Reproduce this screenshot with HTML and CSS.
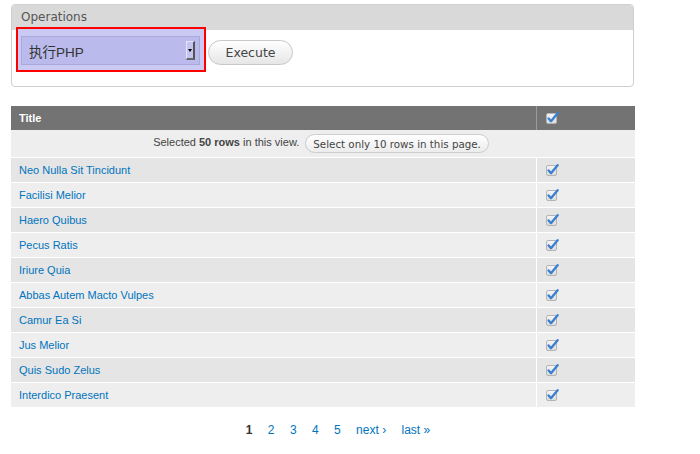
FILE: index.html
```html
<!DOCTYPE html>
<html>
<head>
<meta charset="utf-8">
<link rel="stylesheet" href="styles.css">
</head>
<body>
<div class="page">
  <div class="ops">
    <div class="ops-head">Operations</div>
    <div class="ops-body">
      <div class="highlight">
        <div class="select">
          <span class="select-value">执行PHP</span>
          <span class="select-arrow"><span class="tri"></span></span>
        </div>
      </div>
      <button class="btn">Execute</button>
    </div>
  </div>

  <table class="views">
    <thead>
      <tr>
        <th class="col-title">Title</th>
        <th class="col-check"><svg class="chk" viewBox="0 0 14 14" width="14" height="14"><defs><linearGradient id="bx" x1="0" y1="0" x2="0" y2="1"><stop offset="0" stop-color="#f6f6f6"/><stop offset="1" stop-color="#dcdcdc"/></linearGradient></defs><rect x="1.5" y="2.5" width="10" height="10" rx="1.5" fill="url(#bx)" stroke="#b4b4b4"/><path d="M3.6 7.4 L6 10.2 L12.6 2.2" fill="none" stroke="#3a7fd0" stroke-width="2.3" stroke-linecap="round" stroke-linejoin="round"/></svg></th>
      </tr>
    </thead>
    <tbody>
      <tr class="selall">
        <td colspan="2">Selected <b>50 rows</b> in this view. <button class="pill">Select only 10 rows in this page.</button></td>
      </tr>
      <tr class="odd"><td class="col-title"><a href="#">Neo Nulla Sit Tincidunt</a></td><td class="col-check"><svg class="chk" viewBox="0 0 14 14" width="14" height="14"><rect x="1.5" y="2.5" width="10" height="10" rx="1.5" fill="url(#bx)" stroke="#b4b4b4"/><path d="M3.6 7.4 L6 10.2 L12.6 2.2" fill="none" stroke="#3a7fd0" stroke-width="2.3" stroke-linecap="round" stroke-linejoin="round"/></svg></td></tr>
      <tr class="even"><td class="col-title"><a href="#">Facilisi Melior</a></td><td class="col-check"><svg class="chk" viewBox="0 0 14 14" width="14" height="14"><rect x="1.5" y="2.5" width="10" height="10" rx="1.5" fill="url(#bx)" stroke="#b4b4b4"/><path d="M3.6 7.4 L6 10.2 L12.6 2.2" fill="none" stroke="#3a7fd0" stroke-width="2.3" stroke-linecap="round" stroke-linejoin="round"/></svg></td></tr>
      <tr class="odd"><td class="col-title"><a href="#">Haero Quibus</a></td><td class="col-check"><svg class="chk" viewBox="0 0 14 14" width="14" height="14"><rect x="1.5" y="2.5" width="10" height="10" rx="1.5" fill="url(#bx)" stroke="#b4b4b4"/><path d="M3.6 7.4 L6 10.2 L12.6 2.2" fill="none" stroke="#3a7fd0" stroke-width="2.3" stroke-linecap="round" stroke-linejoin="round"/></svg></td></tr>
      <tr class="even"><td class="col-title"><a href="#">Pecus Ratis</a></td><td class="col-check"><svg class="chk" viewBox="0 0 14 14" width="14" height="14"><rect x="1.5" y="2.5" width="10" height="10" rx="1.5" fill="url(#bx)" stroke="#b4b4b4"/><path d="M3.6 7.4 L6 10.2 L12.6 2.2" fill="none" stroke="#3a7fd0" stroke-width="2.3" stroke-linecap="round" stroke-linejoin="round"/></svg></td></tr>
      <tr class="odd"><td class="col-title"><a href="#">Iriure Quia</a></td><td class="col-check"><svg class="chk" viewBox="0 0 14 14" width="14" height="14"><rect x="1.5" y="2.5" width="10" height="10" rx="1.5" fill="url(#bx)" stroke="#b4b4b4"/><path d="M3.6 7.4 L6 10.2 L12.6 2.2" fill="none" stroke="#3a7fd0" stroke-width="2.3" stroke-linecap="round" stroke-linejoin="round"/></svg></td></tr>
      <tr class="even"><td class="col-title"><a href="#">Abbas Autem Macto Vulpes</a></td><td class="col-check"><svg class="chk" viewBox="0 0 14 14" width="14" height="14"><rect x="1.5" y="2.5" width="10" height="10" rx="1.5" fill="url(#bx)" stroke="#b4b4b4"/><path d="M3.6 7.4 L6 10.2 L12.6 2.2" fill="none" stroke="#3a7fd0" stroke-width="2.3" stroke-linecap="round" stroke-linejoin="round"/></svg></td></tr>
      <tr class="odd"><td class="col-title"><a href="#">Camur Ea Si</a></td><td class="col-check"><svg class="chk" viewBox="0 0 14 14" width="14" height="14"><rect x="1.5" y="2.5" width="10" height="10" rx="1.5" fill="url(#bx)" stroke="#b4b4b4"/><path d="M3.6 7.4 L6 10.2 L12.6 2.2" fill="none" stroke="#3a7fd0" stroke-width="2.3" stroke-linecap="round" stroke-linejoin="round"/></svg></td></tr>
      <tr class="even"><td class="col-title"><a href="#">Jus Melior</a></td><td class="col-check"><svg class="chk" viewBox="0 0 14 14" width="14" height="14"><rect x="1.5" y="2.5" width="10" height="10" rx="1.5" fill="url(#bx)" stroke="#b4b4b4"/><path d="M3.6 7.4 L6 10.2 L12.6 2.2" fill="none" stroke="#3a7fd0" stroke-width="2.3" stroke-linecap="round" stroke-linejoin="round"/></svg></td></tr>
      <tr class="odd"><td class="col-title"><a href="#">Quis Sudo Zelus</a></td><td class="col-check"><svg class="chk" viewBox="0 0 14 14" width="14" height="14"><rect x="1.5" y="2.5" width="10" height="10" rx="1.5" fill="url(#bx)" stroke="#b4b4b4"/><path d="M3.6 7.4 L6 10.2 L12.6 2.2" fill="none" stroke="#3a7fd0" stroke-width="2.3" stroke-linecap="round" stroke-linejoin="round"/></svg></td></tr>
      <tr class="even"><td class="col-title"><a href="#">Interdico Praesent</a></td><td class="col-check"><svg class="chk" viewBox="0 0 14 14" width="14" height="14"><rect x="1.5" y="2.5" width="10" height="10" rx="1.5" fill="url(#bx)" stroke="#b4b4b4"/><path d="M3.6 7.4 L6 10.2 L12.6 2.2" fill="none" stroke="#3a7fd0" stroke-width="2.3" stroke-linecap="round" stroke-linejoin="round"/></svg></td></tr>
    </tbody>
  </table>

  <ul class="pager">
    <li class="current">1</li>
    <li><a href="#">2</a></li>
    <li><a href="#">3</a></li>
    <li><a href="#">4</a></li>
    <li><a href="#">5</a></li>
    <li><a href="#">next ›</a></li>
    <li><a href="#">last »</a></li>
  </ul>
</div>
</body>
</html>
```

FILE: styles.css
```css
html, body {
  margin: 0;
  padding: 0;
  background: #fff;
}
body {
  font-family: "Liberation Sans", Arial, sans-serif;
  font-size: 11px;
  color: #333;
}
.page {
  width: 624px;
  margin-left: 11px;
  padding-top: 4px;
}
.ops {
  width: 621px;
  border: 1px solid #cfcfcf;
  border-radius: 4px;
}
.ops-head {
  height: 25px;
  line-height: 25px;
  background: #d9d9d9;
  padding-left: 9px;
  font-family: "DejaVu Sans", sans-serif;
  font-size: 12px;
  color: #555;
  border-radius: 3px 3px 0 0;
}
.ops-body {
  display: flex;
  align-items: flex-start;
  padding: 0 0 14px 4px;
  margin-top: -3px;
}
.highlight {
  width: 186px;
  height: 41px;
  border: 2px solid #ff0000;
  background: #c9c9f4;
}
.select {
  display: flex;
  align-items: center;
  justify-content: space-between;
  margin: 7px 0 0 3px;
  width: 179px;
  height: 29px;
  box-sizing: border-box;
  background: #babaec;
  border: 1px solid #a9a9dc;
  padding: 0 4px 0 7px;
}
.select-value {
  font-family: "Liberation Sans", "Noto Sans CJK SC", sans-serif;
  font-size: 13.5px;
  color: #333;
}
.select-arrow {
  width: 9px;
  height: 19px;
  box-sizing: border-box;
  border-right: 2px solid #555;
  border-bottom: 2px solid #666;
  border-left: 1px solid #e4e4fa;
  border-top: 1px solid #e4e4fa;
  background: #c4c4f0;
  display: flex;
  justify-content: center;
  padding-top: 7px;
}
.tri {
  width: 0;
  height: 0;
  border-left: 2px solid transparent;
  border-right: 2px solid transparent;
  border-top: 3px solid #000;
}
.btn {
  margin: 13px 0 0 2px;
  width: 85px;
  height: 25px;
  border: 1px solid #c8c8c8;
  border-radius: 13px;
  background: linear-gradient(#ffffff, #e6e6e6);
  font-family: "DejaVu Sans", sans-serif;
  font-size: 12.5px;
  color: #444;
  padding: 0;
}
.views {
  margin-top: 19px;
  width: 624px;
  border-collapse: collapse;
  border-spacing: 0;
}
.views th {
  background: #737373;
  color: #fff;
  height: 24px;
  padding: 0 0 0 8px;
  text-align: left;
  font-size: 11px;
  font-weight: bold;
}
.views th.col-check {
  border-left: 1px solid #9a9a9a;
}
.col-title {
  width: 516px;
}
.col-check {
  width: 90px;
  padding-left: 8px !important;
}
.chk {
  display: block;
}
.selall td {
  background: #eeeeee;
  height: 27px;
  text-align: center;
  padding: 0 4px 0 0;
  color: #444;
}
.pill {
  margin-left: 3px;
  height: 19px;
  padding: 0 7px;
  border: 1px solid #cdcdcd;
  border-radius: 10px;
  background: linear-gradient(#ffffff, #ececec);
  font-family: "DejaVu Sans", sans-serif;
  font-size: 10.3px;
  color: #444;
  vertical-align: middle;
}
.views tbody tr.odd td, .views tbody tr.even td {
  height: 24px;
  padding: 0 0 0 8px;
  border-top: 1px solid #fff;
}
.views tbody tr.odd td { background: #e5e5e5; }
.views tbody tr.even td { background: #eeeeee; }
.views tbody td.col-check {
  border-left: 1px solid #fff;
}
a {
  color: #0074bd;
  text-decoration: none;
}
.pager {
  list-style: none;
  margin: 16px 0 0 0;
  padding: 0 0 0 30px;
  display: flex;
  justify-content: center;
  font-size: 12px;
}
.pager li {
  padding: 0 6px;
  margin: 0 1.7px;
}
.pager li.current {
  font-weight: bold;
  color: #333;
}
```
